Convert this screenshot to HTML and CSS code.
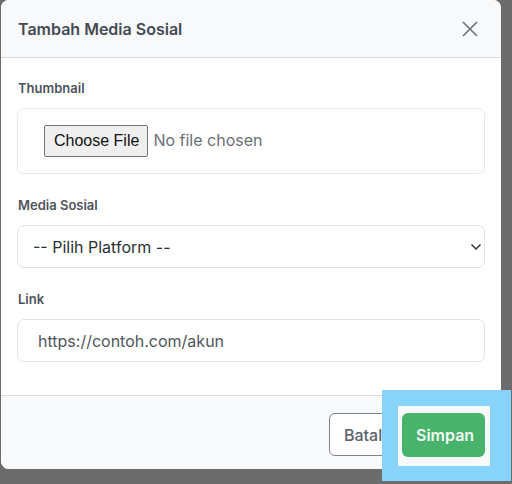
FILE: index.html
```html
<!DOCTYPE html>
<html lang="en">
<head>
    <meta charset="UTF-8">
    <meta name="viewport" content="width=device-width, initial-scale=1.0">
    <title>Tambah Media Sosial</title>
    <link rel="stylesheet" href="styles.css">
</head>
<body>
    <div class="modal">
        <div class="modal-header">
            <h2>Tambah Media Sosial</h2>
            <button type="button" class="close-btn" aria-label="Close">
                <svg width="16" height="16" viewBox="0 0 16 16">
                    <path d="M1 1 L15 15 M15 1 L1 15" stroke="#6b7078" stroke-width="1.6" fill="none"/>
                </svg>
            </button>
        </div>

        <form class="modal-body">
            <div class="input-group">
                <label for="thumb">Thumbnail</label>
                <div class="file-box">
                    <input type="file" id="thumb" name="thumbnail">
                </div>
            </div>

            <div class="input-group">
                <label for="platform">Media Sosial</label>
                <div class="select-box">
                    <select id="platform" name="platform">
                        <option>-- Pilih Platform --</option>
                    </select>
                    <svg class="chevron" width="12" height="8" viewBox="0 0 12 8">
                        <path d="M1.5 1.5 L6 6 L10.5 1.5" stroke="#333" stroke-width="1.5" fill="none"/>
                    </svg>
                </div>
            </div>

            <div class="input-group">
                <label for="link">Link</label>
                <input type="text" id="link" name="link" placeholder="https://contoh.com/akun">
            </div>
        </form>

        <div class="modal-footer">
            <button type="button" class="btn btn-cancel">Batal</button>
            <span class="focus-ring">
                <button type="submit" class="btn btn-save">Simpan</button>
            </span>
        </div>
    </div>
</body>
</html>
```

FILE: styles.css
```css
* {
    margin: 0;
    padding: 0;
    box-sizing: border-box;
}

body {
    font-family: 'Inter', 'Noto Sans', sans-serif;
    background-color: #6c6c6c;
    width: 512px;
    height: 484px;
    overflow: hidden;
    padding: 0 11px 0 1px;
}

.modal {
    width: 500px;
    height: 469px;
    background-color: #fff;
    border-radius: 8px;
    display: flex;
    flex-direction: column;
}

.modal-header {
    height: 58px;
    background-color: #f8f9fa;
    border-bottom: 1px solid #d9dcdf;
    border-radius: 8px 8px 0 0;
    display: flex;
    align-items: center;
    justify-content: space-between;
    padding: 0 23px 0 17px;
}

.modal-header h2 {
    font-size: 16px;
    font-weight: 600;
    color: #434a54;
}

.close-btn {
    background: none;
    border: none;
    display: flex;
    cursor: pointer;
}

.modal-body {
    flex: 1;
    padding: 20px 16px 0 16px;
}

.input-group {
    margin-bottom: 21px;
}

.input-group label {
    display: block;
    font-size: 13px;
    font-weight: 600;
    line-height: 20px;
    color: #4d535b;
    margin-bottom: 10px;
    padding-left: 1px;
}

.file-box {
    height: 66px;
    border: 1px solid #e6e8eb;
    border-radius: 7px;
    display: flex;
    align-items: center;
    padding-left: 26px;
    box-shadow: 0 1px 3px rgba(0, 0, 0, 0.03);
}

.file-box input {
    font-family: 'Inter', sans-serif;
    font-size: 16px;
    color: #6a7078;
}

.file-box input::file-selector-button {
    font-family: 'Liberation Sans', Arial, sans-serif;
    font-size: 16px;
    color: #111;
    background-color: #efefef;
    border: 1px solid #767676;
    border-radius: 2px;
    padding: 6px 8px 6px 9px;
    margin-right: 5px;
    height: 32px;
}

.select-box {
    position: relative;
}

select, input[type="text"] {
    width: 100%;
    height: 43px;
    border: 1px solid #dfe2e6;
    border-radius: 7px;
    background-color: #fff;
    font-family: 'Inter', sans-serif;
    font-size: 16px;
    color: #2b2f34;
}

select {
    appearance: none;
    padding-left: 15px;
}

.chevron {
    position: absolute;
    right: 3px;
    top: 18px;
}

input[type="text"] {
    padding-left: 20px;
}

input[type="text"]::placeholder {
    color: #4f555c;
}

.modal-footer {
    height: 74px;
    background-color: #f8f9fa;
    border-top: 1px solid #d9dcdf;
    border-radius: 0 0 8px 8px;
    display: flex;
    align-items: center;
    justify-content: flex-end;
    gap: 10px;
    padding: 4px 16px 0 0;
}

.btn {
    font-family: 'Inter', sans-serif;
    font-size: 16px;
    height: 43px;
    border-radius: 6px;
    cursor: pointer;
}

.btn-cancel {
    background-color: #fff;
    color: #5c626a;
    font-weight: 500;
    border: 1px solid #7d838a;
    padding: 0 14px;
    width: 63px;
}

.focus-ring {
    position: relative;
    display: flex;
}

.focus-ring::before {
    content: '';
    position: absolute;
    top: -23px;
    left: -20px;
    right: -26px;
    bottom: -24px;
    border-style: solid;
    border-color: #87d3fa;
    border-width: 16px 21px 15px 16px;
    background-color: #f8f9fa;
}

.btn-save {
    position: relative;
    background-color: #48b36b;
    color: #f2fbf4;
    font-weight: 600;
    border: none;
    padding: 0 14px;
    width: 83px;
    height: 44px;
}
```
